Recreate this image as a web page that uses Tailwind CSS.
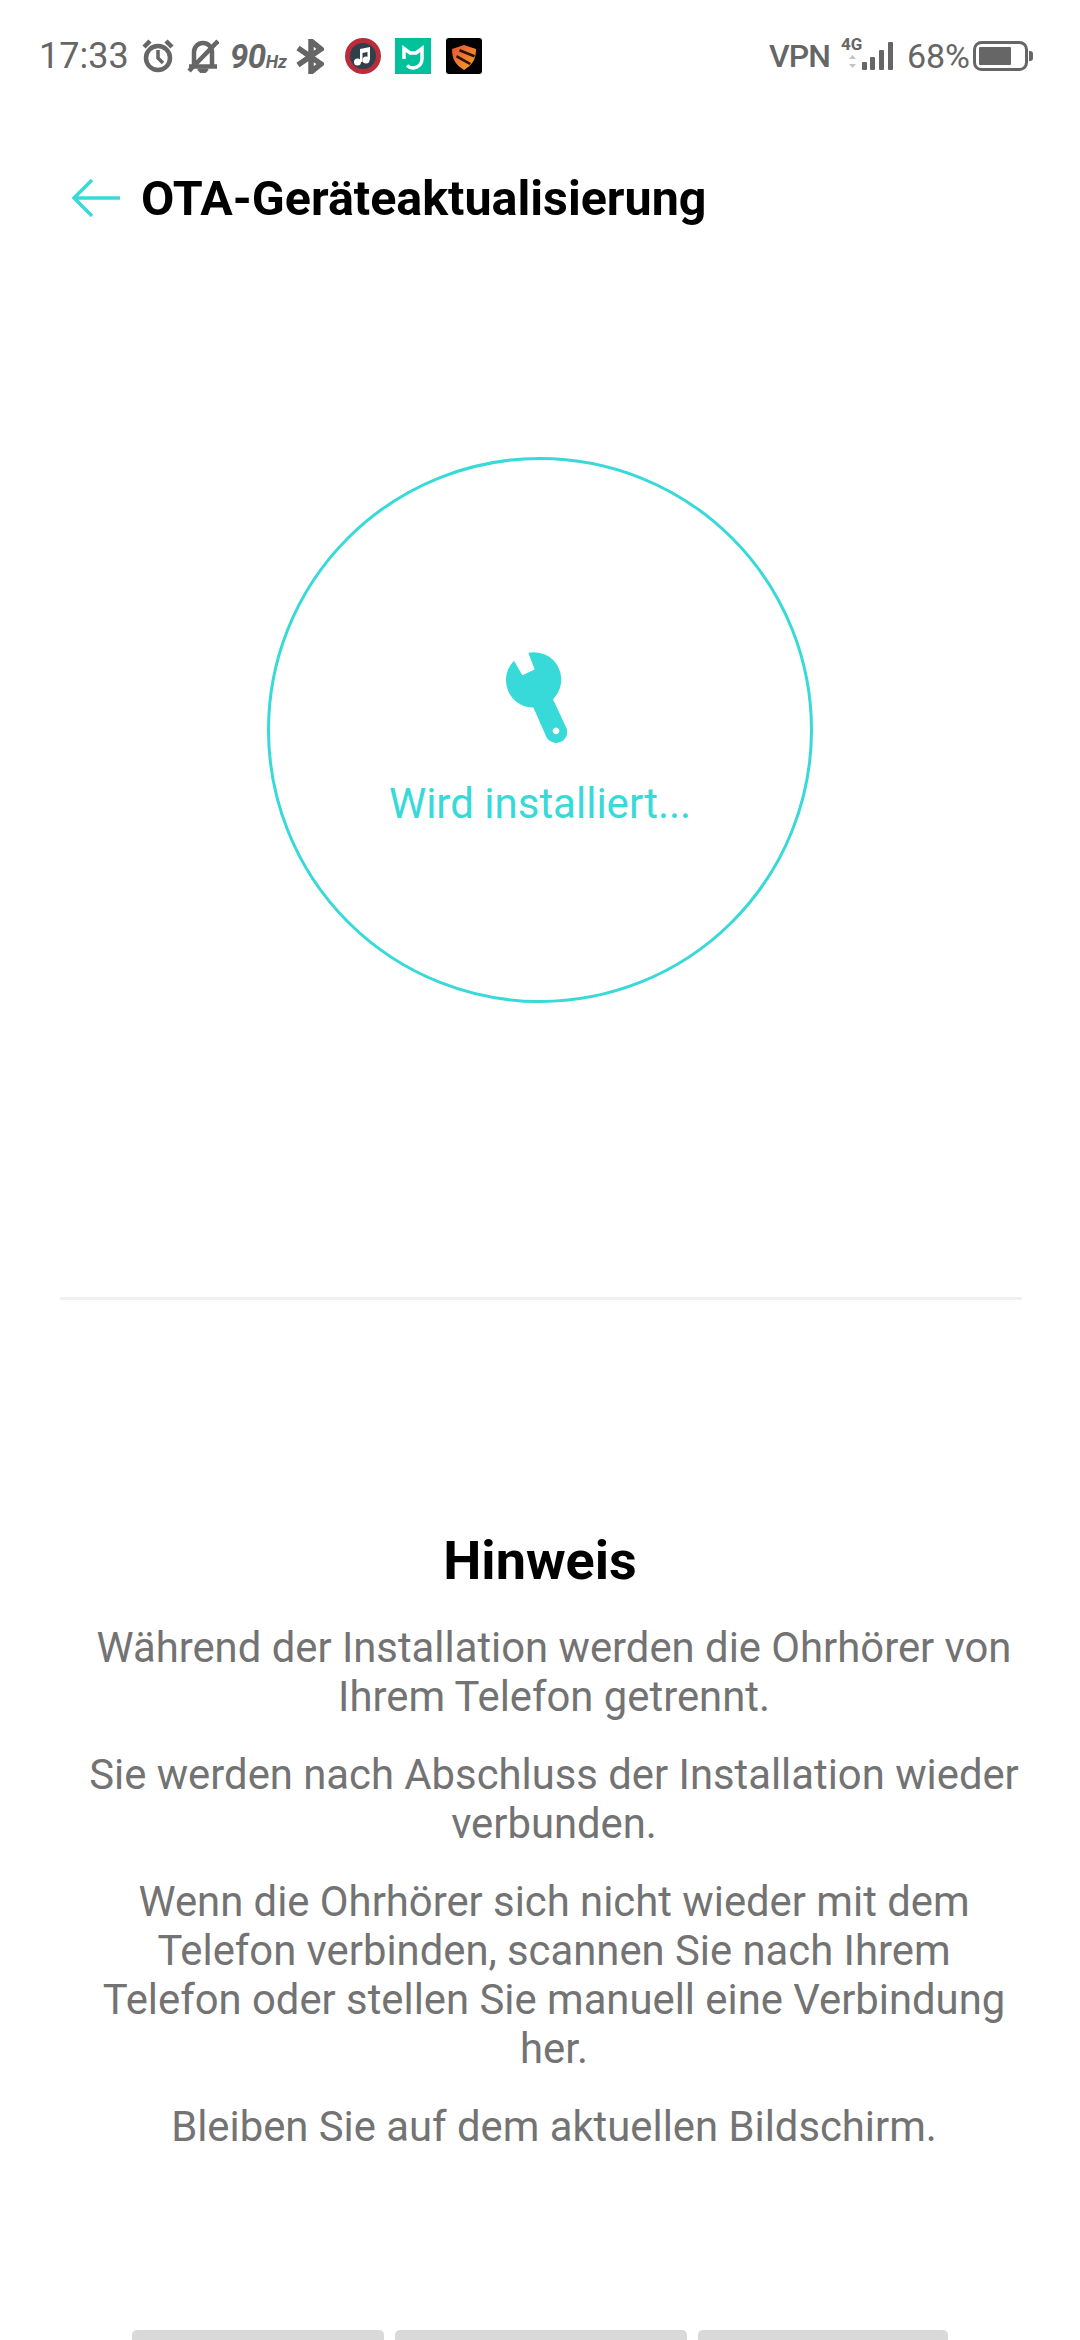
<!DOCTYPE html>
<html lang="de">
<head>
    <meta charset="UTF-8">
    <meta name="viewport" content="width=device-width, initial-scale=1.0">
    <title>OTA-Geräteaktualisierung</title>
    <script src="https://cdn.jsdelivr.net/npm/@tailwindcss/browser@4"></script>
</head>
<body class="bg-white font-[Roboto,sans-serif]">
    <div class="flex flex-col h-[2340px] w-[1080px] overflow-hidden bg-white">
        <!-- Status bar -->
        <div class="flex items-center justify-between h-[112px] pl-[39px] pr-[47px] text-[#666666]">
            <div class="flex items-center">
                <span class="text-[36px] leading-none w-[103px]">17:33</span>
                <svg class="w-[32px] h-[34px]" viewBox="0 0 32 34" fill="none" stroke="#666666">
                    <circle cx="16" cy="19" r="12" stroke-width="4.500"/>
                    <path d="M16 11v8l5 5" stroke-width="3.500"/>
                    <path d="M2 8l6-6M30 8l-6-6" stroke-width="4.500"/>
                </svg>
                <svg class="ml-[13px] w-[32px] h-[34px]" viewBox="0 0 32 34" fill="none" stroke="#666666">
                    <path d="M7 27V13a9 9 0 0 1 18 0v14" stroke-width="4.500"/>
                    <path d="M2 27.500h28" stroke-width="4.500"/>
                    <path d="M11 30a5 4 0 0 0 10 0z" fill="#666666" stroke-width="1"/>
                    <path d="M2 32L31 2" stroke-width="4.500"/>
                </svg>
                <span class="ml-[11px] w-[54px] whitespace-nowrap font-bold italic text-[33px] leading-none tracking-[-0.5px]">90<span class="text-[18px] tracking-normal">Hz</span></span>
                <svg class="ml-[12px] w-[28px] h-[35px]" viewBox="0 0 28 35" fill="none" stroke="#666666" stroke-width="5.500">
                    <path d="M2 9l23 16-10 8V2l10 8L2 26"/>
                </svg>
                <svg class="ml-[21px] w-[36px] h-[36px]" viewBox="0 0 36 36">
                    <circle cx="18" cy="18" r="18" fill="#b92c3c"/>
                    <circle cx="18" cy="18" r="13" fill="#2f404b"/>
                    <path d="M15 11l10-2v13h-2.500v-8l-5 1v9h-2.500z" fill="#ffffff"/>
                    <circle cx="12.500" cy="24" r="3.500" fill="#ffffff"/>
                    <circle cx="21" cy="22" r="3.500" fill="#ffffff"/>
                </svg>
                <svg class="ml-[14px] w-[36px] h-[36px]" viewBox="0 0 36 36">
                    <rect width="36" height="36" fill="#00c19c"/>
                    <path d="M9 21V10.500l6 4.500h6l6-4.500V21a9 9 0 0 1-15 6.500" fill="none" stroke="#ffffff" stroke-width="3.500"/>
                </svg>
                <svg class="ml-[15px] w-[36px] h-[36px]" viewBox="0 0 36 36">
                    <defs>
                        <linearGradient id="shield" x1="0" y1="0" x2="1" y2="1">
                            <stop offset="0" stop-color="#e8503a"/>
                            <stop offset="1" stop-color="#f5a623"/>
                        </linearGradient>
                    </defs>
                    <rect width="36" height="36" rx="3" fill="#000000"/>
                    <path d="M18 7l12 4c0 11-4 16-12 21C10 27 6 22 6 11z" fill="url(#shield)"/>
                    <path d="M14 11l15 6-1 2.500-15-6zM11 17l14 8-1.500 2-13.500-7.500z" fill="#2a1208"/>
                </svg>
            </div>
            <div class="flex items-center">
                <span class="text-[32px] leading-none font-medium tracking-[-1px]">VPN</span>
                <div class="relative ml-[11px] w-[55px] h-[34px]">
                    <span class="absolute left-0 top-[-4px] text-[17px] leading-[18px] font-bold">4G</span>
                    <svg class="w-[55px] h-[34px]" viewBox="0 0 55 34">
                        <path d="M11.500 16l3.500 4h-7zM11.500 29l3.500-4h-7z" fill="#c4c4c4"/>
                        <rect x="21" y="23" width="5" height="8" rx="1" fill="#666666"/>
                        <rect x="29" y="18" width="5" height="13" rx="1" fill="#666666"/>
                        <rect x="38" y="11" width="5" height="20" rx="1" fill="#666666"/>
                        <rect x="47" y="3" width="5" height="28" rx="1" fill="#666666"/>
                    </svg>
                </div>
                <span class="ml-[11px] text-[34px] leading-none">68%</span>
                <svg class="ml-[3px] w-[60px] h-[30px]" viewBox="0 0 60 30">
                    <rect x="1.500" y="1.500" width="52" height="27" rx="7" fill="none" stroke="#666666" stroke-width="3"/>
                    <rect x="6" y="6" width="32" height="18" rx="1" fill="#666666"/>
                    <path d="M56 10h1a3 3 0 0 1 3 3v4a3 3 0 0 1-3 3h-1z" fill="#666666"/>
                </svg>
            </div>
        </div>

        <!-- Header -->
        <div class="flex items-center h-[172px] pl-[72px]">
            <svg class="w-[48px] h-[38px]" viewBox="0 0 48 38" fill="none" stroke="#38d9d9" stroke-width="3.500">
                <path d="M48 19H2M20 1L2 19l18 18"/>
            </svg>
            <h1 class="ml-[21px] mt-[3px] text-[48.400px] leading-none font-bold text-black">OTA-Geräteaktualisierung</h1>
        </div>

        <!-- Progress circle -->
        <div class="flex justify-center mt-[173px]">
            <div class="flex flex-col items-center w-[546px] h-[546px] rounded-full border-[3px] border-[#38d9d9] pt-[191px]">
                <svg class="w-[65px] h-[93px] mr-[8px]" viewBox="430 88 195 278">
                    <path fill="#38d9d9" fill-rule="evenodd" d="M503 93L522 143L485 160L460 117A82 82 0 0 0 518 257L555 340A33 33 0 0 0 618 320L577 232A82 82 0 0 0 503 93ZM586 317a10 10 0 1 0 .01 0Z"/>
                </svg>
                <p class="mt-[35px] text-[42px] leading-[50px] text-[#38d9d9]">Wird installiert...</p>
            </div>
        </div>

        <hr class="mt-[294px] ml-[60px] mr-[58px] border-t-[3px] border-[#f0f0f0]">

        <!-- Notice -->
        <div class="flex flex-col items-center mt-[231px] px-[46px] text-center">
            <h2 class="text-[54px] leading-[60px] font-bold text-black">Hinweis</h2>
            <div class="mt-[32px] pl-[28px] space-y-[29px] text-[41.800px] leading-[49px] text-[#737373]">
                <p>Während der Installation werden die Ohrhörer von Ihrem Telefon getrennt.</p>
                <p>Sie werden nach Abschluss der Installation wieder verbunden.</p>
                <p class="px-[20px]">Wenn die Ohrhörer sich nicht wieder mit dem Telefon verbinden, scannen Sie nach Ihrem Telefon oder stellen Sie manuell eine Verbindung her.</p>
                <p>Bleiben Sie auf dem aktuellen Bildschirm.</p>
            </div>
        </div>

        <!-- Bottom tabs, cut off by the screen edge -->
        <div class="flex mt-auto ml-[132px] gap-[11px] h-[10px]">
            <div class="w-[252px] rounded-t-[5px] bg-[#d9d9d9]"></div>
            <div class="w-[292px] rounded-t-[5px] bg-[#d9d9d9]"></div>
            <div class="w-[250px] rounded-t-[5px] bg-[#d9d9d9]"></div>
        </div>
    </div>
</body>
</html>
